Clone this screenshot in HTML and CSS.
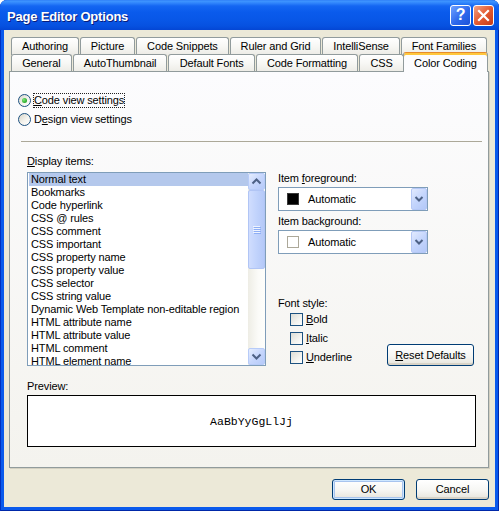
FILE: index.html
```html
<!DOCTYPE html>
<html>
<head>
<meta charset="utf-8">
<title>Page Editor Options</title>
<link rel="stylesheet" href="styles.css">
</head>
<body>
<div class="window">
  <div class="titlebar">
    <div class="title">Page Editor Options</div>
    <div class="caption-btns">
      <div class="cap-btn help">?</div>
      <div class="cap-btn close"><svg width="19" height="19" viewBox="0 0 19 19"><path d="M5 5 L14 14 M14 5 L5 14" stroke="#fff" stroke-width="2.2" stroke-linecap="square"/></svg></div>
    </div>
  </div>
  <div class="client">
    <div class="tabs">
      <div class="tabrow">
        <div class="tab">Authoring</div>
        <div class="tab">Picture</div>
        <div class="tab">Code Snippets</div>
        <div class="tab">Ruler and Grid</div>
        <div class="tab">IntelliSense</div>
        <div class="tab">Font Families</div>
      </div>
      <div class="tabrow">
        <div class="tab">General</div>
        <div class="tab">AutoThumbnail</div>
        <div class="tab">Default Fonts</div>
        <div class="tab">Code Formatting</div>
        <div class="tab">CSS</div>
        <div class="tab active">Color Coding</div>
      </div>
    </div>
    <div class="panel">
      <div class="radios">
        <div class="radio-row"><span class="radio checked"></span><span class="rlabel focus"><u>C</u>ode view settings</span></div>
        <div class="radio-row"><span class="radio"></span><span class="rlabel">D<u>e</u>sign view settings</span></div>
      </div>
      <div class="sep"></div>
      <div class="main">
        <div class="col-left">
          <div class="lbl"><u>D</u>isplay items:</div>
          <div class="listbox">
            <div class="items">
              <div class="item sel">Normal text</div>
              <div class="item">Bookmarks</div>
              <div class="item">Code hyperlink</div>
              <div class="item">CSS @ rules</div>
              <div class="item">CSS comment</div>
              <div class="item">CSS important</div>
              <div class="item">CSS property name</div>
              <div class="item">CSS property value</div>
              <div class="item">CSS selector</div>
              <div class="item">CSS string value</div>
              <div class="item">Dynamic Web Template non-editable region</div>
              <div class="item">HTML attribute name</div>
              <div class="item">HTML attribute value</div>
              <div class="item">HTML comment</div>
              <div class="item">HTML element name</div>
            </div>
            <div class="vscroll">
              <div class="sbtn"><svg width="15" height="15" viewBox="0 0 15 15"><path d="M3.5 9.5 L7.5 5.5 L11.5 9.5" fill="none" stroke="#4D6185" stroke-width="2"/></svg></div>
              <div class="track">
                <div class="thumb"><svg width="8" height="8" viewBox="0 0 8 8"><path d="M0 0.5H7M0 2.5H7M0 4.5H7M0 6.5H7" stroke="#EEF3FE" stroke-width="1"/><path d="M1 1.5H8M1 3.5H8M1 5.5H8M1 7.5H8" stroke="#8DAEF5" stroke-width="1"/></svg></div>
              </div>
              <div class="sbtn"><svg width="15" height="15" viewBox="0 0 15 15"><path d="M3.5 5.5 L7.5 9.5 L11.5 5.5" fill="none" stroke="#4D6185" stroke-width="2"/></svg></div>
            </div>
          </div>
        </div>
        <div class="col-right">
          <div class="flabel">Item <u>f</u>oreground:</div>
          <div class="combo"><span class="swatch black"></span><span class="ctext">Automatic</span><span class="cbtn"><svg width="14" height="20" viewBox="0 0 14 20"><path d="M3.5 8 L7 11.5 L10.5 8" fill="none" stroke="#4D6185" stroke-width="2"/></svg></span></div>
          <div class="flabel gap">Item back<u>g</u>round:</div>
          <div class="combo"><span class="swatch white"></span><span class="ctext">Automatic</span><span class="cbtn"><svg width="14" height="20" viewBox="0 0 14 20"><path d="M3.5 8 L7 11.5 L10.5 8" fill="none" stroke="#4D6185" stroke-width="2"/></svg></span></div>
          <div class="bottom-row">
            <div class="fontstyle">
              <div class="flabel">Font style:</div>
              <div class="chk-row"><span class="chk"></span><span class="chk-label"><u>B</u>old</span></div>
              <div class="chk-row"><span class="chk"></span><span class="chk-label"><u>I</u>talic</span></div>
              <div class="chk-row"><span class="chk"></span><span class="chk-label"><u>U</u>nderline</span></div>
            </div>
            <div class="btn reset"><span><u>R</u>eset Defaults</span></div>
          </div>
        </div>
      </div>
      <div class="preview-sec">
        <div class="lbl">Preview:</div>
        <div class="preview">AaBbYyGgLlJj</div>
      </div>
    </div>
    <div class="dlg-btns">
      <div class="btn default">OK</div>
      <div class="btn">Cancel</div>
    </div>
  </div>
</div>
</body>
</html>
```

FILE: styles.css
```css
* { box-sizing: border-box; }
html, body { margin: 0; padding: 0; }
body {
  width: 499px;
  height: 511px;
  overflow: hidden;
  background: #ffffff;
  font-family: "Liberation Sans", Arial, sans-serif;
  font-size: 11px;
  line-height: 13px;
  letter-spacing: -0.12px;
  color: #000;
}
u { text-decoration: underline; text-underline-offset: 1px; }

.window {
  width: 499px;
  height: 511px;
  display: flex;
  flex-direction: column;
  background: #0A5AEC;
  border-radius: 7px 7px 0 0;
  box-shadow: inset 1px 0 0 #0030C0, inset -1px 0 0 #0028A8, inset 0 -1px 0 #0028A8;
}

.titlebar {
  height: 30px;
  flex: none;
  display: flex;
  align-items: center;
  padding: 0 5px 0 7px;
  border-radius: 7px 7px 0 0;
  background: linear-gradient(#2A78F5 0, #4096FF 1px, #3185FC 3px, #1466F2 6px, #0A5BEC 12px, #0857E7 20px, #0651E0 26px, #0446D4 30px);
}
.title {
  color: #fff;
  font-weight: bold;
  font-size: 13px;
  letter-spacing: -0.2px;
  text-shadow: 1px 1px 0 #0A1D7A;
  padding-top: 3px;
}
.caption-btns { margin-left: auto; display: flex; gap: 2px; }
.cap-btn {
  width: 21px;
  height: 21px;
  border: 1px solid #fff;
  border-radius: 3px;
  display: flex;
  align-items: center;
  justify-content: center;
}
.help {
  background: linear-gradient(135deg, #6FA2FF, #2D68EC 55%, #1B52D8);
  color: #fff;
  font-weight: bold;
  font-size: 16px;
  line-height: 16px;
}
.close { background: linear-gradient(135deg, #F3A385, #E45B32 50%, #C73A18); }

.client {
  flex: 1;
  margin: 0 4px 4px;
  background: #ECE9D8;
  display: flex;
  flex-direction: column;
}

/* tabs */
.tabs { margin: 7px 8px 0 7px; height: 34px; flex: none; }
.tabrow { display: flex; height: 17px; gap: 1px; }
.tab {
  flex: 1 1 auto;
  height: 18px;
  padding: 0 4px;
  text-align: center;
  white-space: nowrap;
  border: 1px solid #919B9C;
  border-bottom: 0;
  border-radius: 3px 3px 0 0;
  background: linear-gradient(#FFFFFF, #F7F7F4 50%, #ECEBE5);
  line-height: 16px;
}
.tab.active {
  position: relative;
  z-index: 2;
  height: 20px;
  margin: -2px -1px 0 -2px;
  padding-top: 2px;
  border-top: 1px solid #E68B2C;
  box-shadow: inset 0 2px 0 #FFC73C;
  background: #FCFCFE;
}

/* panel */
.panel {
  flex: none;
  height: 397px;
  margin: 0 6px 0 5px;
  border: 1px solid #919B9C;
  background: linear-gradient(#FCFCFE, #F4F3EE);
  box-shadow: 1px 1px 0 #D3D0C1;
  display: flex;
  flex-direction: column;
}

.radios { padding: 22px 0 0 8px; display: flex; flex-direction: column; gap: 6px; }
.radio-row { display: flex; align-items: center; height: 13px; }
.radio {
  width: 13px;
  height: 13px;
  flex: none;
  border-radius: 50%;
  border: 1px solid #1C5180;
  background: linear-gradient(135deg, #D8D5C9, #F4F3EE 55%, #FFFFFF);
  display: flex;
  align-items: center;
  justify-content: center;
}
.radio.checked::after {
  content: "";
  width: 5px;
  height: 5px;
  border-radius: 50%;
  background: radial-gradient(circle at 35% 35%, #7EE87A, #2AA82A 70%);
}
.rlabel { margin-left: 2px; border: 1px dotted transparent; line-height: 13px; }
.rlabel.focus { border-color: #222; }

.sep { flex: none; height: 1px; background: #ACA899; margin: 15px 6px 0 11px; }

.main { display: flex; margin-top: 13px; padding-left: 17px; }
.col-left { flex: none; width: 239px; }
.lbl { height: 13px; margin-bottom: 4px; }
.listbox {
  width: 239px;
  height: 194px;
  border: 1px solid #7F9DB9;
  background: #fff;
  display: flex;
}
.items { flex: 1; overflow: hidden; padding-left: 1px; }
.item { height: 13px; line-height: 13px; padding-left: 2px; white-space: nowrap; }
.item.sel { background: #B4C8EC; }

.vscroll {
  width: 17px;
  flex: none;
  display: flex;
  flex-direction: column;
  background: linear-gradient(to right, #EEEDE5, #FBFBF8 60%, #FEFEFB);
}
.sbtn {
  height: 17px;
  flex: none;
  border: 1px solid #B7CBF8;
  border-radius: 2px;
  background: linear-gradient(135deg, #E6EEFE, #C6D6FC 50%, #B6CAF9);
  display: flex;
  align-items: center;
  justify-content: center;
}
.track { flex: 1; }
.thumb {
  height: 79px;
  border: 1px solid #B1C5F5;
  border-radius: 2px;
  background: linear-gradient(to right, #D0DDFE, #C1D3FC 50%, #B5C9F8);
  display: flex;
  align-items: center;
  justify-content: center;
}

.col-right {
  flex: 1;
  margin-left: 12px;
  padding-top: 17px;
  padding-right: 14px;
  display: flex;
  flex-direction: column;
}
.flabel { height: 13px; }
.flabel.gap { margin-top: 4px; }
.combo {
  width: 150px;
  height: 24px;
  margin-top: 2px;
  border: 1px solid #7F9DB9;
  background: #fff;
  display: flex;
  align-items: center;
  padding-left: 8px;
}
.swatch { width: 12px; height: 12px; flex: none; }
.swatch.black { background: #000; border: 1px solid #3A3A3A; }
.swatch.white { background: #fff; border: 1px solid #ACA899; }
.ctext { margin-left: 9px; }
.cbtn {
  margin-left: auto;
  width: 16px;
  height: 22px;
  border: 1px solid #B5C8F6;
  border-radius: 2px;
  background: linear-gradient(135deg, #E2EAFE, #C4D5FC 50%, #B3C8F8);
  display: flex;
  align-items: center;
  justify-content: center;
}

.bottom-row { margin-top: auto; display: flex; align-items: flex-end; justify-content: space-between; }
.fontstyle { padding-bottom: 2px; }
.chk-row { display: flex; align-items: center; height: 13px; margin-top: 6px; padding-left: 12px; }
.fontstyle .flabel + .chk-row { margin-top: 3px; }
.chk {
  width: 13px;
  height: 13px;
  flex: none;
  border: 1px solid #1C5180;
  background: linear-gradient(135deg, #DCDCD5, #F3F3EF 60%, #FFFFFF);
}
.chk-label { margin-left: 3px; }

.btn {
  width: 73px;
  height: 21px;
  border: 1px solid #003C74;
  border-radius: 3px;
  background: linear-gradient(#FFFFFF, #F6F6F3 55%, #E6E4DB);
  box-shadow: inset 0 -2px 0 #D8D3C7;
  display: flex;
  align-items: center;
  justify-content: center;
}
.btn.reset { width: 87px; height: 22px; }
.btn.default { box-shadow: inset 0 0 0 1px #CEE7FF, inset 0 0 0 2px #A8C4EE, inset 0 -2px 0 #8AAEE6; }

.preview-sec { margin-top: 14px; padding-left: 17px; }
.preview-sec .lbl { margin-bottom: 2px; }
.preview {
  width: 449px;
  height: 52px;
  border: 1px solid #000;
  background: #fff;
  display: flex;
  align-items: center;
  justify-content: center;
  font-family: "Liberation Mono", "Courier New", monospace;
  font-size: 11.5px;
  letter-spacing: 0;
}

.dlg-btns { display: flex; justify-content: flex-end; gap: 11px; margin: 11px 6px 0 0; }
```
